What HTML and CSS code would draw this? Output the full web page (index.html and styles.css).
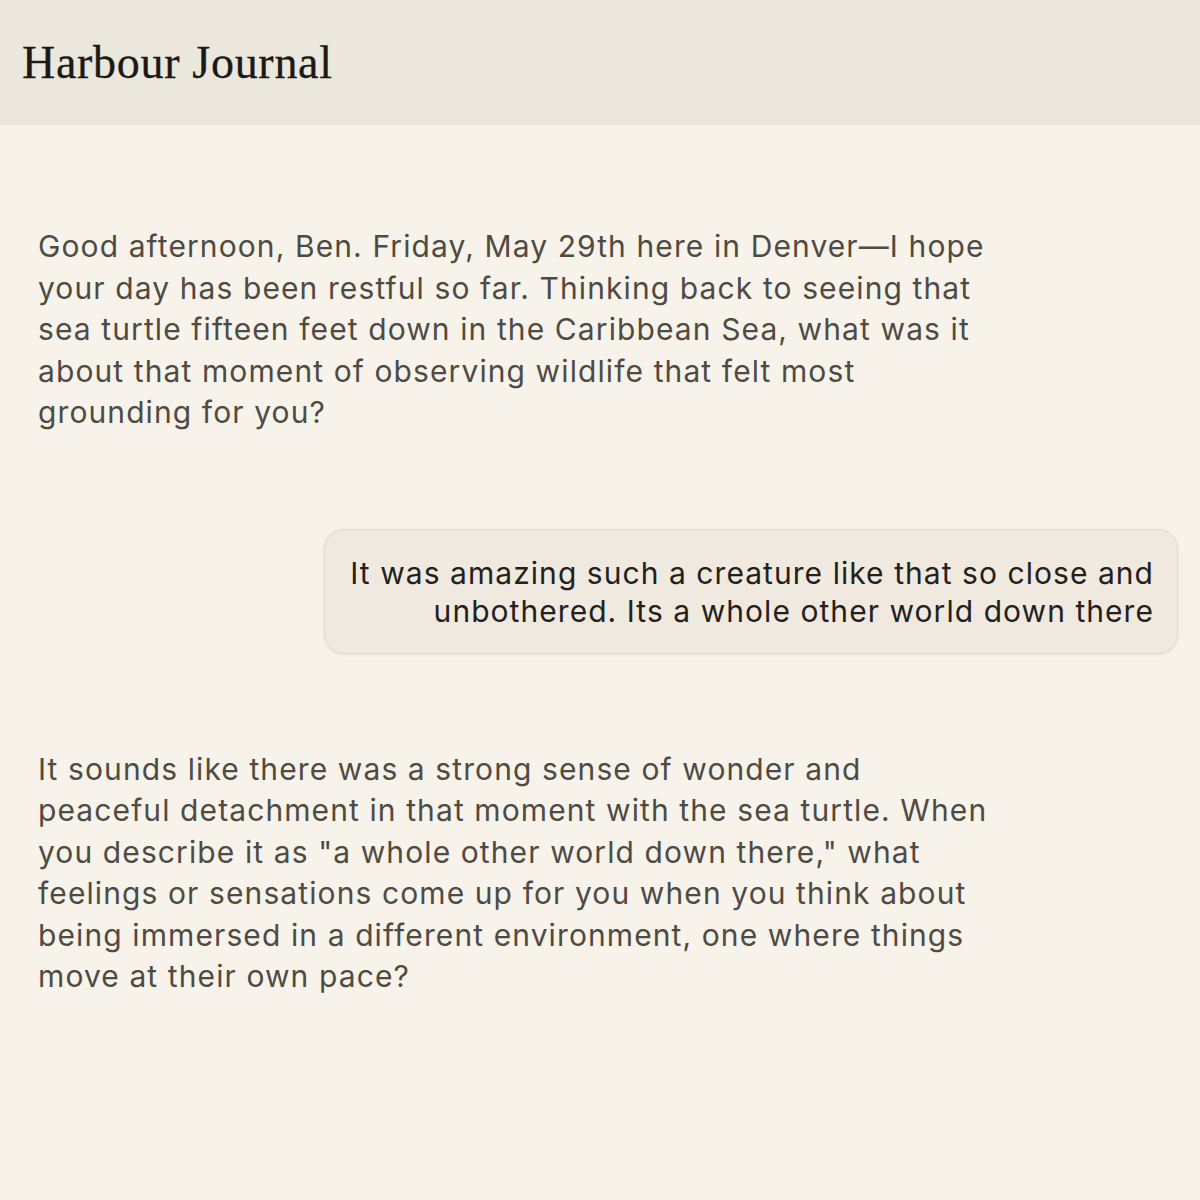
FILE: index.html
```html
<!DOCTYPE html>
<html lang="en">
<head>
<meta charset="utf-8">
<title>Harbour Journal</title>
<link rel="stylesheet" href="styles.css">
</head>
<body>
<header class="topbar">
  <h1 class="brand">Harbour Journal</h1>
</header>
<main class="thread">
  <p class="msg msg-assistant">Good afternoon, Ben. Friday, May 29th here in Denver—I hope<br>your day has been restful so far. Thinking back to seeing that<br>sea turtle fifteen feet down in the Caribbean Sea, what was it<br>about that moment of observing wildlife that felt most<br>grounding for you?</p>
  <div class="row-user">
    <p class="msg msg-user">It was amazing such a creature like that so close and<br>unbothered. Its a whole other world down there</p>
  </div>
  <p class="msg msg-assistant">It sounds like there was a strong sense of wonder and<br>peaceful detachment in that moment with the sea turtle. When<br>you describe it as "a whole other world down there," what<br>feelings or sensations come up for you when you think about<br>being immersed in a different environment, one where things<br>move at their own pace?</p>
</main>
</body>
</html>
```
FILE: styles.css
```css
html, body {
  margin: 0;
  padding: 0;
}
body {
  background: #f7f3ea;
  min-height: 1200px;
  font-family: Inter, "Noto Sans", sans-serif;
}
.topbar {
  height: 125px;
  background: #ece7dd;
  display: flex;
  align-items: center;
  padding: 0 22px;
  box-sizing: border-box;
}
.brand {
  margin: 0;
  font-family: "Liberation Serif", serif;
  font-weight: normal;
  font-size: 46px;
  color: #1c1a17;
  letter-spacing: 0.7px;
  -webkit-text-stroke: 0.3px #1c1a17;
}
.thread {
  padding: 101px 22px 0;
  display: flex;
  flex-direction: column;
  gap: 95px;
}
.msg {
  margin: 0;
}
.msg-assistant {
  padding-left: 16px;
  font-size: 30px;
  line-height: 41.5px;
  color: #4f4b44;
  letter-spacing: 1.1px;
}
.row-user {
  display: flex;
  justify-content: flex-end;
}
.msg-user {
  background: #efe9df;
  border: 1px solid #e2dbcf;
  border-radius: 20px;
  box-shadow: 0 1px 3px rgba(120, 105, 80, 0.12);
  padding: 24px 23px 23px 25px;
  text-align: right;
  font-size: 30px;
  line-height: 38px;
  color: #24211d;
  letter-spacing: 1.05px;
}
```
